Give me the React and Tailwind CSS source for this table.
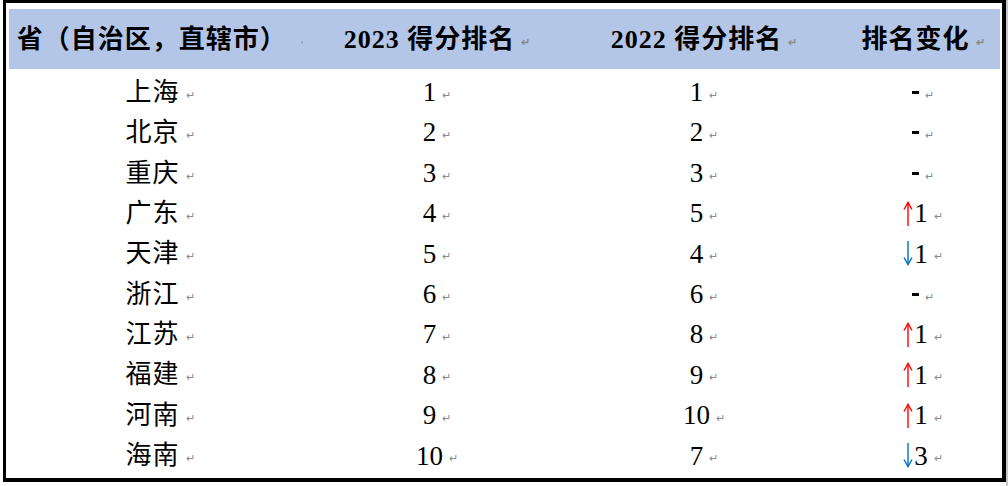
import React from 'react'

// 2023 vs 2022 provincial score ranking table (Word-style, with paragraph marks)
const rows = [
  { name: '上海', y23: '1', y22: '1', change: null },
  { name: '北京', y23: '2', y22: '2', change: null },
  { name: '重庆', y23: '3', y22: '3', change: null },
  { name: '广东', y23: '4', y22: '5', change: { dir: 'up', n: '1' } },
  { name: '天津', y23: '5', y22: '4', change: { dir: 'down', n: '1' } },
  { name: '浙江', y23: '6', y22: '6', change: null },
  { name: '江苏', y23: '7', y22: '8', change: { dir: 'up', n: '1' } },
  { name: '福建', y23: '8', y22: '9', change: { dir: 'up', n: '1' } },
  { name: '河南', y23: '9', y22: '10', change: { dir: 'up', n: '1' } },
  { name: '海南', y23: '10', y22: '7', change: { dir: 'down', n: '3' } },
]

const font = { fontFamily: '"Liberation Serif", "Noto Sans CJK SC", serif' }
const cols = 'grid grid-cols-[302px_252px_282px_156px]'

function Mark() {
  return <span className="ml-[6px] text-[11px] leading-none text-[#8a8a8a] translate-y-[3px]">↵</span>
}

function Arrow({ dir }) {
  const color = dir === 'up' ? '#ff0000' : '#0070c0'
  return (
    <svg width="10" height="25" viewBox="0 0 10 25" className="mr-[1px]">
      {dir === 'up' ? (
        <g stroke={color} strokeWidth="1.4" fill="none">
          <line x1="5" y1="1.5" x2="5" y2="25" />
          <polyline points="1,8.5 5,1.5 9,8.5" />
        </g>
      ) : (
        <g stroke={color} strokeWidth="1.4" fill="none">
          <line x1="5" y1="0" x2="5" y2="23.5" />
          <polyline points="1,16.5 5,23.5 9,16.5" />
        </g>
      )}
    </svg>
  )
}

function Cell({ children, mark = true, cjk }) {
  return (
    <div className="flex items-center justify-center">
      <span className={cjk ? 'tracking-[1px]' : 'text-[27px]'}>{children}</span>
      {mark && <Mark />}
    </div>
  )
}

export default function App() {
  return (
    <div className="w-[1008px] h-[486px] bg-white flex overflow-hidden" style={font}>
      <div className="ml-[3px] w-[1003px] h-[482px] border-l-[3px] border-t-[3px] border-r-4 border-b-4 border-black pt-[6px] pl-[3px] pr-[2px] text-black">
        <div className={`${cols} h-[60px] bg-[#b4c6e7] text-[26px] font-bold`}>
          <div className="flex items-center justify-center">
            <span className="tracking-[1px]">省（自治区，直辖市）</span>
            <span className="ml-[14px] text-[8px] text-[#8a8a8a] translate-y-[3px]">‹</span>
          </div>
          <Cell cjk>2023 得分排名</Cell>
          <Cell cjk>2022 得分排名</Cell>
          <Cell cjk>排名变化</Cell>
        </div>
        <div className="pt-[3px]">
          {rows.map(r => (
            <div key={r.name} className={`${cols} h-[40.4px] text-[26px]`}>
              <Cell cjk>{r.name}</Cell>
              <Cell>{r.y23}</Cell>
              <Cell>{r.y22}</Cell>
              <div className="flex items-center justify-center">
                {r.change ? (
                  <span className="flex items-center">
                    <Arrow dir={r.change.dir} />
                    <span className="text-[27px]">{r.change.n}</span>
                  </span>
                ) : (
                  <span className="inline-block w-[7px] h-[3px] bg-black" />
                )}
                <Mark />
              </div>
            </div>
          ))}
        </div>
      </div>
      <div className="w-[2px] h-full bg-[#c8c8c8]" />
    </div>
  )
}
